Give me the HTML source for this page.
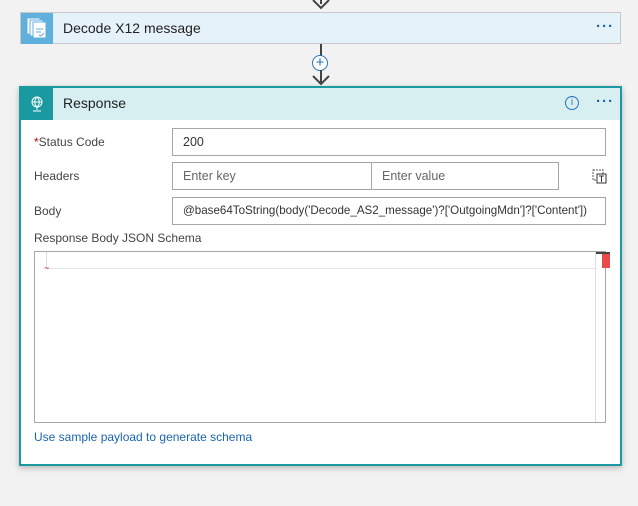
<!DOCTYPE html><html><head><style>
body{margin:0;width:638px;height:506px;background:#f2f2f2;font-family:"Segoe UI","Liberation Sans",sans-serif;position:relative;overflow:hidden;font-size:13px;color:#333}
.a{position:absolute}
.inp{position:absolute;background:#fff;border:1px solid #a6a6a6;box-sizing:border-box;height:28px;line-height:26px;padding-left:10px;font-size:12.5px;white-space:nowrap;overflow:hidden}
.lbl{position:absolute;font-size:12px;color:#444}
.dots{position:absolute;color:#1a64b0;font-size:15px;letter-spacing:1px;font-weight:bold}
</style></head><body>
<div class="a" style="left:320px;top:0;width:2px;height:4px;background:#444"></div>
<svg class="a" style="left:310px;top:0" width="22" height="12"><path d="M3 0 L11 8 L19 0" stroke="#444" stroke-width="2" fill="none"/></svg>
<div class="a" style="left:20px;top:12px;width:601px;height:32px;background:#e6f2fa;border:1px solid #c8c8c8;box-sizing:border-box"></div>
<div class="a" style="left:21px;top:13px;width:32px;height:31px;background:#5fb0dc"></div>
<svg class="a" style="left:24px;top:15px" width="26" height="26"><rect x="3" y="3" width="13" height="16" fill="#fff" stroke="#5fb0dc"/><rect x="6" y="5" width="13" height="16" fill="#fff" stroke="#5fb0dc"/><rect x="9" y="7" width="13" height="16" fill="#fff" stroke="#5fb0dc"/><path d="M12 14h7M12 17h5M15 20l2 1 3-3" stroke="#5fb0dc" fill="none"/></svg>
<div class="a" style="left:63px;top:20px;font-size:14px;color:#222">Decode X12 message</div>
<div class="dots" style="left:596px;top:18px">···</div>
<div class="a" style="left:320px;top:44px;width:2px;height:12px;background:#444"></div>
<div class="a" style="left:312px;top:55px;width:16px;height:16px;border:1px solid #2a72b8;border-radius:50%;background:#fff;box-sizing:border-box;text-align:center;line-height:13px;color:#2a72b8;font-size:15px">+</div>
<svg class="a" style="left:310px;top:70px" width="22" height="16"><path d="M11 0 V14 M3 6 L11 14 L19 6" stroke="#444" stroke-width="2" fill="none"/></svg>
<div class="a" style="left:19px;top:86px;width:603px;height:380px;background:#fff;border:2px solid #1a9aa0;box-sizing:border-box;box-shadow:0 2px 6px rgba(0,0,0,.25)"></div>
<div class="a" style="left:21px;top:88px;width:599px;height:32px;background:#d8eff1"></div>
<div class="a" style="left:21px;top:88px;width:32px;height:32px;background:#1a9aa0"></div>
<svg class="a" style="left:29px;top:95px" width="16" height="18"><circle cx="8" cy="7" r="5" stroke="#fff" fill="none"/><path d="M3 7h10M8 2c-3 3-3 7 0 10M8 2c3 3 3 7 0 10M8 12v3M4 16h8" stroke="#fff" fill="none"/></svg>
<div class="a" style="left:63px;top:95px;font-size:14px;color:#222">Response</div>
<div class="a" style="left:565px;top:96px;width:14px;height:14px;border:1px solid #2a72b8;border-radius:50%;box-sizing:border-box;text-align:center;font-size:10px;line-height:12px;color:#2a72b8">i</div>
<div class="dots" style="left:596px;top:93px">···</div>
<div class="lbl" style="left:34px;top:135px"><span style="color:#c00">*</span>Status Code</div>
<div class="inp" style="left:172px;top:128px;width:434px">200</div>
<div class="lbl" style="left:34px;top:169px">Headers</div>
<div class="inp" style="left:172px;top:162px;width:200px;color:#666">Enter key</div>
<div class="inp" style="left:371px;top:162px;width:188px;color:#666">Enter value</div>
<svg class="a" style="left:592px;top:169px" width="16" height="16"><rect x="1" y="1" width="10" height="10" fill="none" stroke="#555" stroke-dasharray="2 1"/><rect x="5" y="5" width="9" height="9" fill="#fff" stroke="#333"/><path d="M7 7h5M9.5 7v6" stroke="#333"/></svg>
<div class="lbl" style="left:34px;top:204px">Body</div>
<div class="inp" style="left:172px;top:197px;width:434px;font-size:11.6px">@base64ToString(body('Decode_AS2_message')?['OutgoingMdn']?['Content'])</div>
<div class="lbl" style="left:34px;top:231px">Response Body JSON Schema</div>
<div class="a" style="left:34px;top:251px;width:572px;height:172px;border:1px solid #a6a6a6;box-sizing:border-box;background:#fff"></div>
<div class="a" style="left:46px;top:252px;width:549px;height:16px;border-left:1px solid #ddd;border-bottom:1px solid #e6e6e6"></div>
<div class="a" style="left:595px;top:252px;width:1px;height:170px;background:#ddd"></div>
<div class="a" style="left:602px;top:252px;width:8px;height:16px;background:#e84b4b"></div>
<div class="a" style="left:596px;top:252px;width:14px;height:2px;background:#444"></div>
<div class="a" style="left:44px;top:263px;color:#c00;font-size:9px">~</div>
<div class="a" style="left:34px;top:430px;color:#1a64b0;font-size:12px">Use sample payload to generate schema</div>
</body></html>
